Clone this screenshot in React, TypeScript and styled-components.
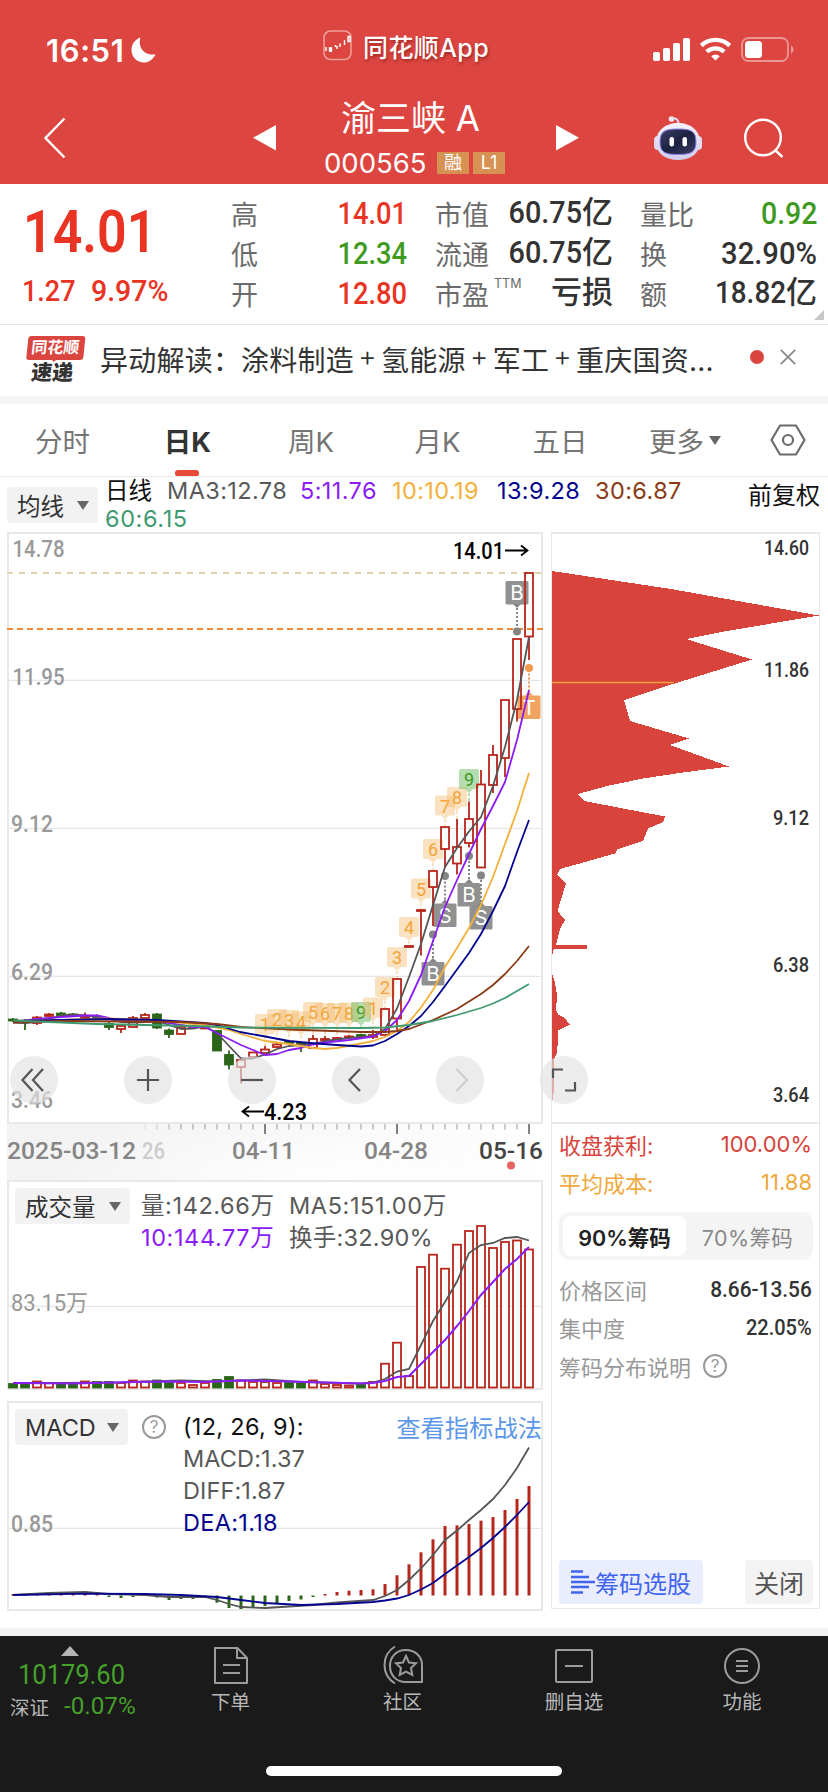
import React from 'react';
import styled, { createGlobalStyle } from 'styled-components';

const UI = `Inter, "Noto Sans CJK SC", sans-serif`;
const DIN = `Roboto, "Noto Sans CJK SC", sans-serif`;

const C = {
  brand: '#dd4540',
  red: '#e93323',
  green: '#3f9a22',
  ink: '#333333',
  label: '#6b6b6b',
  mute: '#999999',
  line: '#e8e8e8',
  up: '#b8261b',
  down: '#2a6518',
  ma3: '#555555',
  ma5: '#8b1cf6',
  ma10: '#f2b03c',
  ma13: '#04048f',
  ma30: '#8a3a14',
  ma60: '#3f9a70',
};

const GlobalStyle = createGlobalStyle`
  * { box-sizing: border-box; }
  body { margin: 0; background: #fff; font-family: ${UI}; }
  svg { display: block; flex: none; }
`;

const Page = styled.div`
  width: 828px;
  height: 1792px;
  display: flex;
  flex-direction: column;
  background: #fff;
  overflow: hidden;
`;

/* ---------- shared ---------- */

const Num = styled.span<{ $size: number; $sx?: number; $from?: 'left' | 'right' | 'center'; $color?: string; $weight?: number }>`
  display: inline-block;
  font-family: ${DIN};
  font-size: ${p => p.$size}px;
  font-weight: ${p => p.$weight ?? 500};
  color: ${p => p.$color ?? C.ink};
  transform: scaleX(${p => p.$sx ?? 0.88});
  transform-origin: ${p => p.$from ?? 'right'} center;
  white-space: nowrap;
`;

const Caret = styled.i<{ $w?: number; $h?: number }>`
  width: 0;
  height: 0;
  border-left: ${p => (p.$w ?? 12) / 2}px solid transparent;
  border-right: ${p => (p.$w ?? 12) / 2}px solid transparent;
  border-top: ${p => p.$h ?? 9}px solid #666;
`;

/* ---------- header ---------- */

const Header = styled.header`
  height: 184px;
  flex: none;
  background: ${C.brand};
  color: #fff;
`;

const StatusBar = styled.div`
  height: 92px;
  padding: 30px 0 0 46px;
  display: grid;
  grid-template-columns: 277px 330px 1fr;
  align-items: start;
`;

const Clock = styled.div`
  display: flex;
  align-items: center;
  gap: 7px;
  height: 40px;
  font-size: 31px;
  font-weight: 600;
  letter-spacing: 0.6px;
`;

const AppName = styled.div`
  display: flex;
  align-items: center;
  gap: 11px;
  height: 31px;
  font-size: 25px;
  font-weight: 500;
  letter-spacing: 0.4px;
  white-space: nowrap;
  text-shadow: 1px 2px 3px rgba(80, 0, 0, 0.45);
`;

const Signals = styled.div`
  display: flex;
  align-items: center;
  height: 40px;
`;

const TitleBar = styled.div`
  height: 92px;
  padding-left: 43px;
  display: flex;
  align-items: center;
`;

const TitleBlock = styled.div`
  width: 280px;
  height: 92px;
  display: flex;
  flex-direction: column;
  align-items: center;
`;

const StockName = styled.div`
  height: 54px;
  padding: 0 11px 0 0;
  font-size: 35px;
  line-height: 53px;
  white-space: nowrap;
`;

const CodeRow = styled.div`
  height: 36px;
  display: flex;
  align-items: center;
  font-size: 27.5px;
  line-height: 36px;
`;

const Code = styled.span`
  margin: -3px 11px 0 1px;
  width: 102px;
  white-space: nowrap;
`;

const Badge = styled.span`
  width: 32px;
  height: 22px;
  margin: -2px 4px 0 0;
  background: #d79152;
  font-size: 18px;
  line-height: 22px;
  text-align: center;
`;

const TitleGap = styled.span<{ $w: number }>`
  width: ${p => p.$w}px;
  flex: none;
`;

/* ---------- quote ---------- */

const Quote = styled.section`
  position: relative;
  height: 141px;
  flex: none;
  padding: 9px 11px 0 22px;
  display: flex;
  border-bottom: 1px solid #e6e6e6;
`;

const PriceBlock = styled.div`
  width: 209px;
`;

const BigPrice = styled.div`
  height: 78px;
  padding-left: 1px;
  line-height: 77px;
`;

const ChangeRow = styled.div`
  display: flex;
  line-height: 40px;
`;

const StatColumn = styled.div<{ $w: number; $gap: number }>`
  width: ${p => p.$w}px;
  margin-right: ${p => p.$gap}px;
`;

const Stat = styled.div`
  height: 40px;
  display: flex;
  justify-content: space-between;
  align-items: center;
  font-size: 27px;
  color: ${C.label};
  white-space: nowrap;
`;

const StatValue = styled.span`
  height: 40px;
  line-height: 39px;
  font-family: ${DIN};
  font-size: 31px;
  font-weight: 500;
  color: ${C.ink};
`;

const Sup = styled.sup`
  font-size: 12.5px;
  line-height: 12px;
  margin-left: 5px;
  position: relative;
  top: -7px;
`;

const Corner = styled.i`
  position: absolute;
  right: 4px;
  bottom: 4px;
  border-left: 10px solid transparent;
  border-bottom: 10px solid #c8c8c8;
`;

/* ---------- news ---------- */

const News = styled.section`
  height: 79px;
  flex: none;
  display: flex;
  align-items: center;
  padding: 0 32px 8px 24px;
  border-bottom: 8px solid #f4f4f4;
  font-size: 28px;
  color: ${C.ink};
`;

const NewsLogo = styled.div`
  width: 60px;
  margin: 7px 16px 0 0;
  display: flex;
  flex-direction: column;
  align-items: center;
  transform: skewX(-6deg);
`;

const LogoTop = styled.div`
  position: relative;
  width: 57px;
  height: 24px;
  border-radius: 3px;
  background: #db453f;
  color: #fff;
  font-size: 16px;
  font-weight: 700;
  line-height: 23px;
  text-align: center;
  &::after {
    content: '';
    position: absolute;
    left: 25px;
    top: 23px;
    border: 3px solid transparent;
    border-top-color: #db453f;
  }
`;

const LogoBottom = styled.div`
  margin-left: -1px;
  font-size: 21px;
  font-weight: 900;
  line-height: 25px;
`;

const Headline = styled.div`
  flex: 1;
  display: flex;
  white-space: nowrap;
  letter-spacing: 0.22px;
  margin-top: 4px;
`;

const Plus = styled.span`
  width: 27px;
  text-align: center;
  font-weight: 300;
`;

const RedDot = styled.i<{ $d: number }>`
  width: ${p => p.$d}px;
  height: ${p => p.$d}px;
  border-radius: 50%;
  background: #db453f;
  flex: none;
`;

/* ---------- tabs ---------- */

const Tabs = styled.nav`
  height: 73px;
  flex: none;
  display: grid;
  grid-template-columns: 125px 125px 122px 131px 114px 136px 70px;
  border-bottom: 1px solid #e8e8e8;
`;

const Tab = styled.div<{ $active?: boolean }>`
  position: relative;
  display: flex;
  align-items: center;
  justify-content: center;
  gap: 5px;
  font-size: 27.5px;
  white-space: nowrap;
  color: ${p => (p.$active ? C.ink : '#757575')};
  font-weight: ${p => (p.$active ? 700 : 400)};
  &::after {
    content: '';
    display: ${p => (p.$active ? 'block' : 'none')};
    position: absolute;
    left: 50px;
    bottom: 0;
    width: 24px;
    height: 6px;
    border-radius: 3px 3px 2px 2px;
    background: #e74a38;
  }
`;

/* ---------- moving average legend ---------- */

const Legend = styled.div`
  height: 55px;
  flex: none;
  display: flex;
  padding: 0 8px 0 7px;
  font-size: 23.5px;
`;

const PickerSlot = styled.div`
  padding-top: 10px;
`;

const Picker = styled.button<{ $w: number }>`
  width: ${p => p.$w}px;
  height: 36px;
  flex: none;
  padding: 0 9px 0 10px;
  display: flex;
  align-items: center;
  justify-content: space-between;
  border: 0;
  border-radius: 4px;
  background: #f2f2f2;
  color: ${C.ink};
  font: 400 23.5px ${UI};
  white-space: nowrap;
`;

const LegendItems = styled.div`
  flex: 1;
  display: flex;
  flex-wrap: wrap;
  gap: 0 15px;
  margin: 0 0 0 7px;
  line-height: 28px;
`;

const Entry = styled.span<{ $color?: string; $w?: number; $track?: number }>`
  color: ${p => p.$color ?? '#595959'};
  width: ${p => (p.$w ? p.$w + 'px' : 'auto')};
  letter-spacing: ${p => p.$track ?? 0.4}px;
  white-space: nowrap;
`;

const Adjust = styled.div`
  line-height: 37px;
  font-size: 24px;
  color: #111;
`;

/* ---------- main area ---------- */

const Main = styled.main`
  height: 1104px;
  flex: none;
  display: flex;
  gap: 8px;
  padding: 0 7px;
  border-bottom: 8px solid #f3f3f3;
`;

const Charts = styled.div`
  width: 536px;
  display: flex;
  flex-direction: column;
`;

const Panel = styled.div<{ $h: number; $mt?: number }>`
  position: relative;
  height: ${p => p.$h}px;
  margin-top: ${p => p.$mt ?? 0}px;
  flex: none;
  border: 2px solid ${C.line};
`;

const Canvas = styled.svg`
  position: absolute;
  left: -2px;
  top: -2px;
  overflow: visible;
`;

const Axis = styled.div`
  height: 56px;
  background: radial-gradient(ellipse 300px 90px at 330px 56px, #ffffff 0%, rgba(255,255,255,0) 100%), linear-gradient(90deg, #f3f3f3 0%, #f3f3f3 55%, #ffffff 100%);
`;

const ControlRow = styled.div`
  position: absolute;
  left: 1px;
  top: 522px;
  display: flex;
  gap: 56px;
  z-index: 2;
`;

const RoundButton = styled.button<{ $extra?: number }>`
  width: 48px;
  height: 48px;
  margin-right: ${p => p.$extra ?? 0}px;
  padding: 0;
  border: 0;
  border-radius: 50%;
  display: grid;
  place-items: center;
  background: rgba(226, 226, 226, 0.66);
`;

const PanelHead = styled.div`
  position: relative;
  display: flex;
  padding: 6px 0 0 6px;
  font-size: 23.5px;
`;

const VolumeText = styled.div`
  margin: 2px 0 0 11px;
  display: grid;
  grid-template-columns: 148px 170px;
  line-height: 32px;
`;

const MacdText = styled.div`
  margin-left: 17px;
  display: flex;
  flex-direction: column;
  line-height: 32px;
  padding-top: 2px;
`;

const Help = styled.span<{ $mt?: number }>`
  width: 24px;
  height: 24px;
  margin-top: ${p => p.$mt ?? 0}px;
  flex: none;
  border: 2px solid #999;
  border-radius: 50%;
  color: #999;
  font-size: 17px;
  line-height: 20px;
  text-align: center;
`;

const StrategyLink = styled.a`
  margin: 3px -1px 0 auto;
  line-height: 32px;
  font-size: 24.3px;
  color: #5b97e8;
`;

/* ---------- chips ---------- */

const Chips = styled.aside`
  width: 269px;
  height: 1077px;
  border: 1.5px solid ${C.line};
  border-top-width: 2px;
  display: flex;
  flex-direction: column;
`;

const ChipChart = styled.div`
  position: relative;
  height: 590px;
  flex: none;
  border-bottom: 2px solid ${C.line};
`;

const ChipInfo = styled.div`
  flex: 1;
  display: flex;
  flex-direction: column;
  padding: 1px 6px 3px 7px;
  font-size: 22px;
`;

const InfoRow = styled.div<{ $color: string }>`
  height: 38px;
  display: flex;
  align-items: center;
  justify-content: space-between;
  color: ${p => p.$color};
  padding-right: 1px;
  white-space: nowrap;
`;

const Segment = styled.div`
  height: 48px;
  margin: 11px 0 10px;
  padding: 4px;
  display: flex;
  border-radius: 11px;
  background: #f4f4f4;
`;

const SegmentItem = styled.div<{ $active?: boolean }>`
  flex: 1;
  display: grid;
  place-items: center;
  border-radius: 8px;
  background: ${p => (p.$active ? '#fff' : 'transparent')};
  color: ${p => (p.$active ? '#222' : '#888')};
  font-weight: ${p => (p.$active ? 600 : 400)};
  font-size: 21.5px;
  letter-spacing: ${p => (p.$active ? 0 : 0.4)}px;
`;

const HelpRow = styled.div`
  height: 40px;
  display: flex;
  align-items: center;
  gap: 12px;
  color: ${C.mute};
`;

const ChipActions = styled.div`
  margin-top: auto;
  display: flex;
  justify-content: space-between;
  padding-bottom: 1px;
`;

const ActionButton = styled.button<{ $w: number; $primary?: boolean }>`
  width: ${p => p.$w}px;
  height: 44px;
  padding: 0;
  border: 0;
  border-radius: 4px;
  display: flex;
  align-items: center;
  justify-content: center;
  background: ${p => (p.$primary ? '#e9edfe' : '#f3f3f3')};
  color: ${p => (p.$primary ? '#4064ee' : '#555')};
  font: 400 ${p => (p.$primary ? 24 : 25)}px ${UI};
  white-space: nowrap;
`;

/* ---------- bottom bar ---------- */

const Bottom = styled.footer`
  flex: 1;
  position: relative;
  background: #1a1a1a;
  color: #b8b8b8;
  display: flex;
`;

const IndexBlock = styled.div`
  width: 148px;
  padding: 10px 0 0 10px;
`;

const IndexArrow = styled.i`
  display: block;
  width: 0;
  margin-left: 51px;
  border-left: 9px solid transparent;
  border-right: 9px solid transparent;
  border-bottom: 10px solid #b5b5b5;
`;

const IndexValue = styled.div`
  height: 38px;
  line-height: 37px;
  padding-left: 8px;
`;

const IndexRow = styled.div`
  height: 24px;
  display: flex;
  align-items: center;
  font-size: 19.5px;
  white-space: nowrap;
`;

const NavItem = styled.div<{ $w: number }>`
  width: ${p => p.$w}px;
  padding-top: 9px;
  display: flex;
  flex-direction: column;
  align-items: center;
  font-size: 19.5px;
  line-height: 35px;
`;

const HomeBar = styled.i`
  position: absolute;
  left: 266px;
  bottom: 16px;
  width: 296px;
  height: 10px;
  border-radius: 5px;
  background: #fff;
`;

/* ---------- chart data ---------- */

const STEP = 12;
const LAST = 529;
const cx = (k: number) => LAST - STEP * k;

// [high, bodyTop, bodyBottom, low, rising], newest first
type Candle = [number, number, number, number, 0 | 1];
const candles: Candle[] = [
  [573, 573, 636.5, 660, 1], [639, 639, 709, 721.5, 1], [700, 700, 758, 777, 1], [745, 755, 785, 793, 1],
  [770, 784.5, 867.5, 868, 1], [801.5, 819, 843, 847.5, 1], [819, 847, 863.5, 874.5, 1], [827, 827, 849, 867.5, 1],
  [871, 871, 887, 926, 1], [910, 910, 911, 955.5, 1], [946, 946, 947, 947, 1], [979, 979, 1018.5, 1030, 1],
  [1009, 1009, 1035, 1035, 1], [1030, 1035, 1037, 1039, 1], [1034, 1035, 1037, 1037, 0], [1035, 1036.5, 1037.5, 1038, 1],
  [1037, 1038, 1039, 1040, 1], [1036, 1039, 1040, 1042, 1], [1035, 1039, 1048, 1049, 1], [1042, 1043, 1045, 1052, 0],
  [1041, 1042, 1043, 1045, 0], [1043, 1044.5, 1047, 1048, 1], [1046, 1049.5, 1053, 1053, 1], [1052, 1052.5, 1057, 1057, 1],
  [1059, 1060, 1067, 1083.5, 1], [1050.5, 1055, 1064.5, 1069.5, 0], [1030, 1031, 1050.5, 1051, 0], [1026, 1027, 1028.5, 1029, 1],
  [1025, 1026, 1027, 1028, 1], [1026, 1027, 1034, 1034, 1], [1028.5, 1030.5, 1034, 1038, 0], [1013, 1014.5, 1027.5, 1029, 0],
  [1013, 1015, 1018, 1018, 1], [1016, 1018, 1027, 1027, 1], [1025, 1026, 1029, 1033, 1], [1022, 1024, 1027, 1030, 0],
  [1014.5, 1018, 1019, 1020, 0], [1012.5, 1017, 1018, 1019, 1], [1013, 1014.5, 1015, 1016, 0], [1012, 1013.5, 1015.5, 1016, 0],
  [1013, 1014.5, 1016, 1016, 1], [1016, 1017.5, 1023, 1025, 1], [1019, 1021, 1021.5, 1030, 0], [1018, 1019.5, 1020.5, 1022, 0],
];

const volumeTops = [
  1249.5, 1240.5, 1242, 1248, 1226, 1231, 1244.7, 1268.7, 1254.7, 1267, 1376, 1342.7, 1363.7, 1382, 1385, 1385.5,
  1385, 1384, 1380.5, 1383.5, 1383, 1383, 1382, 1382, 1380.5, 1377, 1380, 1383, 1385, 1383, 1383, 1380.5, 1381.5,
  1380.5, 1383, 1382, 1382, 1381.5, 1384, 1384, 1383, 1381.5, 1383, 1384,
];
const fallingVolume = [14, 19, 20, 25, 26, 30, 31, 35, 36, 38, 39, 42, 43];

const macdEnds = [
  1486, 1499, 1510, 1517, 1520.7, 1524, 1525.3, 1526, 1539.3, 1552.3, 1564.3, 1575.3, 1584, 1589.3, 1590, 1590.7,
  1592, 1594, 1597, 1599.5, 1601, 1603.5, 1606, 1607.5, 1609, 1608, 1602.7, 1597, 1599, 1599, 1600, 1597.5, 1594.5,
  1597, 1598, 1597, 1594, 1593.5, 1593, 1593, 1593, 1594, 1594, 1594,
];
const MACD_ZERO = 1595.5;

const averages: [string, string][] = [
  [C.ma3, '13,1022.5 25,1023 37,1022 49,1019 61,1015.5 73,1014.5 85,1015.5 97,1016.5 109,1019 121,1022 133,1022.5 145,1022 157,1021 169,1025 181,1029 193,1028.5 205,1026.5 217,1033 229,1046 241,1058.5 253,1058.5 265,1054.5 277,1049 289,1046 301,1045 313,1044 325,1041 337,1039.5 349,1038 361,1037 373,1036 385,1029 397,1008.5 409,977 421,944 433,905 445,867 457,848 469,831.5 481,817 493,786 505,747 517,700 529,637'],
  [C.ma5, '13,1022 37,1019 61,1017 85,1015.5 97,1015.5 109,1018 121,1021 157,1021 169,1023 193,1027 205,1027 217,1033 229,1039 241,1045 253,1050 265,1055 277,1054 289,1050 301,1048 313,1044.5 325,1042.5 349,1040 373,1036.5 385,1031 397,1020 409,1001 421,975 433,941 445,907 457,880 469,854 481,829 493,806 505,782 517,740 529,690'],
  [C.ma10, '13,1021 61,1020 109,1018.5 157,1020.5 205,1025 229,1030 241,1034 265,1041 289,1044 313,1048 325,1049 337,1048 361,1043.5 373,1041 385,1037 397,1031 409,1022 421,1007.5 433,990 445,967 457,948 469,928 481,905 493,877 505,844 517,811 529,773'],
  [C.ma13, '13,1021 61,1020 109,1019 157,1020 205,1023 217,1025 240,1032 265,1036.5 289,1041 310,1043 337,1045 361,1046.5 373,1045.5 385,1041 397,1034 409,1026 421,1016 433,1002 445,986 469,953 481,934 493,911 505,886 517,852 529,820'],
  [C.ma30, '13,1022.5 61,1021 121,1021.5 181,1022 217,1024 241,1027 289,1029.5 361,1032 385,1032 397,1031 409,1029 433,1020 457,1009 481,994 493,985 505,974 517,961 529,946'],
  [C.ma60, '13,1020.5 97,1024 193,1026 241,1027.5 361,1028 385,1027.5 409,1025 433,1021 457,1015 481,1008 493,1003.5 505,998 517,991 529,984'],
];

const counts: [number, number, string][] = [
  [22, 1014, '1'], [21, 1009, '2'], [20, 1010, '3'], [19, 1011.5, '4'], [18, 1002, '5'], [17, 1003, '6'],
  [16, 1003, '7'], [15, 1002.5, '8'], [14, 1002, '9'], [13, 997.5, '1'], [12, 977, '2'], [11, 947, '3'],
  [10, 917, '4'], [9, 878.5, '5'], [8, 839, '6'], [7, 795.5, '7'], [6, 787, '8'], [5, 769, '9'],
];

// [index, tag top, dot y, letter, colour]
const trades: [number, number, number, string, string][] = [
  [1, 581, 631.5, 'B', '#858585'],
  [0, 695.5, 668, 'T', '#f09a50'],
  [7, 903.5, 876, 'S', '#858585'],
  [5, 883, 856, 'B', '#858585'],
  [4, 906, 875.5, 'S', '#858585'],
  [8, 962, 934.5, 'B', '#858585'],
];

const TextIn = ({ x, y, w, size = 23, color = C.mute, weight = 500, children }: { x: number; y: number; w: number; size?: number; color?: string; weight?: number; children: string }) => (
  <text x={x} y={y} fontFamily={DIN} fontSize={size} fontWeight={weight} fill={color} textLength={w} lengthAdjust="spacingAndGlyphs">
    {children}
  </text>
);

const CountTag = ({ k, top, label }: { k: number; top: number; label: string }) => {
  const x = cx(k);
  const last = label === '9';
  const tint = last ? 'rgba(110,187,98,0.5)' : 'rgba(243,180,95,0.4)';
  const end = Math.max(candles[k][0], top + 26);
  return (
    <g>
      <path d={`M${x - 8} ${top}h16a2 2 0 0 1 2 2v16a2 2 0 0 1 -2 2h-4l-4 4l-4 -4h-4a2 2 0 0 1 -2 -2v-16a2 2 0 0 1 2 -2z`} fill={tint} />
      <line x1={x} x2={x} y1={top + 24} y2={end} stroke={tint} strokeWidth="2" strokeDasharray="3 2" />
      <text x={x} y={top + 17} textAnchor="middle" fontFamily={DIN} fontSize="18" fontWeight="400" fill={last ? '#3b9a1f' : '#f2a53a'}>
        {label}
      </text>
    </g>
  );
};

const TradeTag = ({ k, top, dot, letter, color }: { k: number; top: number; dot: number; letter: string; color: string }) => {
  const x = cx(k);
  const above = dot > top;
  const edge = above ? top + 23 : top;
  return (
    <g>
      <line x1={x} x2={x} y1={edge} y2={dot} stroke={color} strokeWidth="2" strokeDasharray="2 2" />
      <circle cx={x} cy={dot} r="4" fill={color} />
      <rect x={x - 11.5} y={top} width="23" height="23.5" rx="1.5" fill={color} opacity="0.9" />
      <path d={above ? `M${x - 4} ${edge}h8l-4 4z` : `M${x - 4} ${edge}h8l-4 -4z`} fill={color} />
      <text x={x} y={top + 19} textAnchor="middle" fontFamily={UI} fontSize="20.5" fontWeight="400" fill="#fff">
        {letter}
      </text>
    </g>
  );
};

const KLineChart = () => (
  <Canvas width="536" height="592" viewBox="7 532 536 592">
    {[680.3, 828.3, 976.3].map(y => (
      <line key={y} x1="8" x2="542" y1={y} y2={y} stroke="#e6e6e6" strokeWidth="1.3" />
    ))}
    <TextIn x={12.5} y={557} w={52}>14.78</TextIn>
    <TextIn x={12.5} y={684.5} w={52}>11.95</TextIn>
    <TextIn x={11} y={832} w={42}>9.12</TextIn>
    <TextIn x={11} y={979.5} w={42}>6.29</TextIn>
    <TextIn x={11} y={1107.7} w={42}>3.46</TextIn>
    <line x1="7" x2="543" y1="573" y2="573" stroke="#e3d2b2" strokeWidth="2" strokeDasharray="6 6" />
    <line x1="7" x2="543" y1="629" y2="629" stroke="#f08a36" strokeWidth="2" strokeDasharray="6 4" />
    {counts.map(([k, top, label]) => <CountTag key={k} k={k} top={top} label={label} />)}
    {trades.map(([k, top, dot, letter, color]) => <TradeTag key={k} k={k} top={top} dot={dot} letter={letter} color={color} />)}
    {candles.map(([high, top, bottom, low, up], k) => (
      <g key={k} stroke={up ? C.up : C.down} strokeWidth="1.8" fill={up ? 'none' : C.down}>
        <line x1={cx(k)} x2={cx(k)} y1={high} y2={top} />
        <line x1={cx(k)} x2={cx(k)} y1={bottom} y2={low} />
        <rect x={cx(k) - 4} y={top} width="8" height={bottom - top} />
      </g>
    ))}
    {averages.map(([color, points]) => (
      <polyline key={color} points={points} fill="none" stroke={color} strokeWidth="1.8" strokeLinejoin="round" />
    ))}
    <TextIn x={453} y={558.7} w={51} color="#000">14.01</TextIn>
    <path d="M505 550.5H527M521 545.5l6.5 5l-6.5 5" stroke="#000" strokeWidth="1.8" fill="none" />
    <TextIn x={264} y={1120} w={43} color="#000">4.23</TextIn>
    <path d="M264 1111.500H243M249 1106.500l-6.500 5l6.500 5" stroke="#000" strokeWidth="1.8" fill="none" />
  </Canvas>
);

const DateAxis = () => (
  <svg width="536" height="56" viewBox="7 1124 536 56">
    {Array.from({ length: 33 }, (_, i) => {
      const k = 32 - i;
      const major = k === 0 || k === 11 || k === 22;
      return <line key={k} x1={cx(k)} x2={cx(k)} y1="1124" y2={major ? 1134 : 1129.5} stroke={major ? '#808080' : '#999'} strokeWidth={major ? 2 : 1} opacity={i < 3 ? 0.25 + i * 0.25 : 1} />;
    })}
    <TextIn x={7} y={1159} w={129} color="#858585">2025-03-12</TextIn>
    <TextIn x={142} y={1159} w={23} color="#cccccc">26</TextIn>
    <TextIn x={232} y={1159} w={63} color="#858585">04-11</TextIn>
    <TextIn x={364} y={1159} w={64} color="#858585">04-28</TextIn>
    <TextIn x={479} y={1159} w={64} color="#444">05-16</TextIn>
    <circle cx="511" cy="1165.500" r="4" fill="#e56462" />
  </svg>
);

const VolumeChart = () => (
  <Canvas width="536" height="210" viewBox="7 1180 536 210">
    <line x1="8" x2="542" y1="1306.300" y2="1306.300" stroke="#e6e6e6" strokeWidth="1.3" />
    <TextIn x={11} y={1311} w={77} weight={400}>83.15万</TextIn>
    {volumeTops.map((top, k) => {
      const falling = fallingVolume.includes(k);
      return <rect key={k} x={cx(k) - 4} y={top} width="8" height={1387.5 - top} stroke={falling ? C.down : C.up} strokeWidth="1.8" fill={falling ? C.down : '#fff'} />;
    })}
    <polyline points="13,1383 61,1383 121,1382.500 181,1380.500 217,1381.500 265,1379.500 301,1382 361,1383.500 373,1382.500 385,1379 397,1371.500 409,1369 421,1345 433,1321 445,1302 457,1281.500 469,1253 481,1245 493,1243 505,1238 517,1237 529,1240.500" fill="none" stroke={C.ma3} strokeWidth="1.8" />
    <polyline points="13,1383 73,1383.500 133,1382 169,1381.500 205,1382 241,1380.500 289,1381.500 325,1382.500 361,1383.500 373,1383 385,1381 397,1377 409,1376 421,1364 433,1352 445,1340 457,1326 469,1311 481,1295 493,1282 505,1269 517,1259 529,1247" fill="none" stroke={C.ma5} strokeWidth="2" />
  </Canvas>
);

const MacdChart = () => (
  <Canvas width="536" height="210" viewBox="7 1401 536 210">
    <line x1="8" x2="542" y1="1528.300" y2="1528.300" stroke="#e6e6e6" strokeWidth="1.3" />
    <TextIn x={11} y={1531.7} w={42}>0.85</TextIn>
    {macdEnds.map((end, k) => (
      <line key={k} x1={cx(k)} x2={cx(k)} y1={MACD_ZERO} y2={end} stroke={end < MACD_ZERO ? C.up : C.down} strokeWidth="3" />
    ))}
    <polyline points="13,1595 49,1593 85,1592 109,1594 145,1595 169,1597 205,1597 217,1600 229,1604 241,1607 265,1608 289,1606.500 313,1605 337,1602.500 373,1600 385,1596 397,1590 409,1580 421,1568.500 433,1555 445,1540 457,1530.500 469,1520 481,1510 493,1499 505,1485 517,1468 529,1447.500" fill="none" stroke={C.ma3} strokeWidth="1.8" />
    <polyline points="13,1595 85,1593.700 145,1594 181,1595 217,1597 241,1600 265,1603 301,1605 337,1604 373,1602 385,1600.500 397,1598.500 409,1595 421,1589.500 433,1583 445,1574 457,1565.500 469,1557 481,1548 493,1538 505,1527 517,1515 529,1502" fill="none" stroke={C.ma13} strokeWidth="1.8" />
  </Canvas>
);

const ChipDistribution = () => (
  <svg width="267" height="588" viewBox="552 534 267 588">
    <g fill="#d8433b" shapeRendering="crispEdges">
      <path d="M552 571L671 589L819 615.500L727 631L686 639L752 659.500L673 684L624 700L630 721L689 738.500L670 745L729 766.500L683 772.500L643 778.500L607 786L578 794L584 801L665 816.500L663 822L648 828.500L643 841L617 849.500L615 853.500L560 869L557 875L566 883L557.500 911L565 920L560 929L556 945H587V948.500H554L552 956Z" />
      <path d="M552 973L555 983L557.500 998L555.500 1008L558 1014.500L564 1017.500L570 1024.500L557.500 1031L558.500 1038.500L556.500 1054L553.500 1060V1094L552 1103Z" />
    </g>
    <line x1="552" x2="674" y1="682.500" y2="682.500" stroke="#f2a13c" strokeWidth="1.5" />
    <TextIn x={764} y={555} w={45} size={20} color={C.ink}>14.60</TextIn>
    <TextIn x={764} y={677} w={45} size={20} color={C.ink}>11.86</TextIn>
    <TextIn x={773} y={824.5} w={36} size={20} color={C.ink}>9.12</TextIn>
    <TextIn x={773} y={972} w={36} size={20} color={C.ink}>6.38</TextIn>
    <TextIn x={773} y={1102} w={36} size={20} color={C.ink}>3.64</TextIn>
  </svg>
);

/* ---------- icons ---------- */

const Glyph = ({ d, color = '#555', width = 2.2 }: { d: string; color?: string; width?: number }) => (
  <svg width="48" height="48" viewBox="0 0 48 48" fill="none" stroke={color} strokeWidth={width}>
    <path d={d} />
  </svg>
);

const Robot = () => (
  <svg width="48" height="46" viewBox="0 0 48 46">
    <defs>
      <linearGradient id="shell" x1="0" y1="0" x2="0" y2="1">
        <stop offset="0" stopColor="#f4f3fb" />
        <stop offset="1" stopColor="#cfcdea" />
      </linearGradient>
      <linearGradient id="visor" x1="0" y1="0" x2="1" y2="1">
        <stop offset="0" stopColor="#3b4368" />
        <stop offset="0.5" stopColor="#1c2140" />
        <stop offset="1" stopColor="#3a3f66" />
      </linearGradient>
    </defs>
    <path d="M18 4C22 2.500 24.500 4.500 24.500 9" fill="none" stroke="#dcdaf0" strokeWidth="2" />
    <circle cx="17.500" cy="4" r="2.800" fill="#e9e7f5" />
    <rect x="0" y="21" width="8" height="14" rx="4" fill="#dedcf0" />
    <rect x="40" y="21" width="8" height="14" rx="4" fill="#dedcf0" />
    <path d="M24 8C37 8 46 16 46 27C46 38 37 45 24 45S2 38 2 27C2 16 11 8 24 8Z" fill="url(#shell)" />
    <path d="M24 14C37 14 42 16 42 27C42 38 36 39.500 24 39.500S6 38 6 27C6 16 11 14 24 14Z" fill="url(#visor)" stroke="#8f80ee" strokeWidth="1" />
    <rect x="15.500" y="22" width="4.500" height="9.500" rx="2.200" fill="#fff" />
    <rect x="28.500" y="22" width="4.500" height="9.500" rx="2.200" fill="#fff" />
  </svg>
);

const navStroke = { fill: 'none', stroke: '#9c9c9c', strokeWidth: 2 } as const;

export default function App() {
  return (
    <Page>
      <GlobalStyle />
      <Header>
        <StatusBar>
          <Clock>
            16:51
            <svg width="25" height="26" viewBox="0 0 25 26"><path d="M9.500 0.500C7 8.500 11 18.500 24.500 17.500C21.500 23 17.500 25.500 13 25.500C6 25.500 0.500 20 0.500 13C0.500 7 4 2.500 9.500 0.500Z" fill="#fff" /></svg>
          </Clock>
          <AppName>
            <svg width="29" height="31" viewBox="0 0 29 31" fill="none" stroke="#fff">
              <rect x="1" y="1" width="27" height="28.500" rx="6.500" stroke="#f0a09c" strokeWidth="1.500" />
              <path d="M3 17v4M7.500 17.500v4.500M12.500 15v2M14 16v3M17 13.500v3.500" strokeWidth="1.500" />
              <path d="M6.500 18h2v3h-2zM21.500 10v5M25 6.500h2v5h-2z" strokeWidth="1.400" />
            </svg>
            同花顺App
          </AppName>
          <Signals>
            <svg width="142" height="26" viewBox="0 0 142 26">
              <g fill="#fff">
                <rect x="0" y="15" width="7" height="9" rx="1.800" />
                <rect x="10" y="11" width="7" height="13" rx="1.800" />
                <rect x="20" y="6" width="7" height="18" rx="1.800" />
                <rect x="30" y="1" width="7" height="23" rx="1.800" />
                <path d="M62.500 23.500L58.200 19.200A6.500 6.500 0 0 1 66.800 19.200Z" />
              </g>
              <path d="M53.800 14.800A12.500 12.500 0 0 1 71.200 14.800" fill="none" stroke="#fff" strokeWidth="4.200" />
              <path d="M48.300 8.600A20.500 20.500 0 0 1 76.700 8.600" fill="none" stroke="#fff" strokeWidth="4.400" />
              <rect x="89" y="1" width="46" height="23" rx="6.500" fill="none" stroke="#eb9693" strokeWidth="1.800" />
              <rect x="92" y="4" width="17" height="17" rx="3.500" fill="#fff" />
              <path d="M138 8.500C141.500 10 141.500 15 138 16.500Z" fill="#eb9693" />
            </svg>
          </Signals>
        </StatusBar>
        <TitleBar>
          <svg width="24" height="42" viewBox="0 0 24 42" fill="none" stroke="#fff" strokeWidth="2.400"><path d="M21.500 1.500L2.500 21L21.500 40.500" /></svg>
          <TitleGap $w={186} />
          <svg width="23" height="26" viewBox="0 0 23 26"><path d="M23 0V25.500L0 12.700Z" fill="#fff" /></svg>
          <TitleBlock>
            <StockName>渝三峡 A</StockName>
            <CodeRow>
              <Code>000565</Code>
              <Badge>融</Badge>
              <Badge>L1</Badge>
            </CodeRow>
          </TitleBlock>
          <svg width="23" height="26" viewBox="0 0 23 26"><path d="M0 0V25.500L23 12.700Z" fill="#fff" /></svg>
          <TitleGap $w={75} />
          <Robot />
          <TitleGap $w={42} />
          <svg width="41" height="42" viewBox="0 0 41 42" fill="none" stroke="#fff" strokeWidth="2.400"><circle cx="19" cy="20.500" r="17.800" /><path d="M31.500 33.500L38.500 40" /></svg>
        </TitleBar>
      </Header>

      <Quote>
        <PriceBlock>
          <BigPrice><Num $size={59} $sx={0.88} $from="left" $weight={600} $color={C.red}>14.01</Num></BigPrice>
          <ChangeRow>
            <Num $size={30} $sx={0.9} $from="left" $color={C.red}>1.27</Num>
            <TitleGap $w={9} />
            <Num $size={30} $sx={0.95} $from="left" $color={C.red}>9.97%</Num>
          </ChangeRow>
        </PriceBlock>
        <StatColumn $w={176} $gap={28}>
          <Stat>高<Num $size={31} $color={C.red}>14.01</Num></Stat>
          <Stat>低<Num $size={31} $color={C.green}>12.34</Num></Stat>
          <Stat>开<Num $size={31} $color={C.red}>12.80</Num></Stat>
        </StatColumn>
        <StatColumn $w={178} $gap={27}>
          <Stat>市值<StatValue><Num $size={31} $sx={0.93}>60.75</Num>亿</StatValue></Stat>
          <Stat>流通<StatValue><Num $size={31} $sx={0.93}>60.75</Num>亿</StatValue></Stat>
          <Stat><span>市盈<Sup>TTM</Sup></span><StatValue>亏损</StatValue></Stat>
        </StatColumn>
        <StatColumn $w={177} $gap={0}>
          <Stat>量比<Num $size={31} $sx={0.92} $color={C.green}>0.92</Num></Stat>
          <Stat>换<Num $size={31} $sx={0.94}>32.90%</Num></Stat>
          <Stat>额<StatValue><Num $size={31} $sx={0.9}>18.82</Num>亿</StatValue></Stat>
        </StatColumn>
        <Corner />
      </Quote>

      <News>
        <NewsLogo>
          <LogoTop>同花顺</LogoTop>
          <LogoBottom>速递</LogoBottom>
        </NewsLogo>
        <Headline>
          异动解读：涂料制造<Plus>+</Plus>氢能源<Plus>+</Plus>军工<Plus>+</Plus>重庆国资...
        </Headline>
        <RedDot $d={14} />
        <TitleGap $w={16} />
        <svg width="16" height="16" viewBox="0 0 16 16" stroke="#8a8a8a" strokeWidth="1.800"><path d="M0.800 0.800L15.200 15.200M15.200 0.800L0.800 15.200" /></svg>
      </News>

      <Tabs>
        <Tab>分时</Tab>
        <Tab $active>日K</Tab>
        <Tab>周K</Tab>
        <Tab>月K</Tab>
        <Tab>五日</Tab>
        <Tab>更多<Caret $w={13} $h={9} /></Tab>
        <Tab>
          <svg width="36" height="32" viewBox="0 0 36 32" fill="none" stroke="#6b6b6b" strokeWidth="2.200"><path d="M10 1.500H26L34.500 16L26 30.500H10L1.500 16Z" strokeLinejoin="round" /><circle cx="18" cy="16" r="5" /></svg>
        </Tab>
      </Tabs>

      <Legend>
        <PickerSlot><Picker $w={91}>均线<Caret /></Picker></PickerSlot>
        <LegendItems>
          <Entry $color="#111" $track={0}>日线</Entry>
          <Entry $w={118}>MA3:12.78</Entry>
          <Entry $w={77} $color={C.ma5}>5:11.76</Entry>
          <Entry $w={90} $color={C.ma10}>10:10.19</Entry>
          <Entry $w={83} $color={C.ma13}>13:9.28</Entry>
          <Entry $w={90} $color={C.ma30}>30:6.87</Entry>
          <Entry $color={C.ma60} $track={0.6}>60:6.15</Entry>
        </LegendItems>
        <Adjust>前复权</Adjust>
      </Legend>

      <Main>
        <Charts>
          <Panel $h={592}>
            <KLineChart />
            <ControlRow>
              <RoundButton $extra={10}><Glyph d="M22.500 13L12.500 24L22.500 35M33 13L23 24L33 35" /></RoundButton>
              <RoundButton><Glyph d="M24 13V35M13 24H35" /></RoundButton>
              <RoundButton><Glyph d="M13 24H35" /></RoundButton>
              <RoundButton><Glyph d="M28 13L17.500 24L28 35" /></RoundButton>
              <RoundButton><Glyph d="M20.500 13L31 24L20.500 35" color="#cfcfcf" /></RoundButton>
              <RoundButton><Glyph d="M13 22V13.500H23M35 26V34.500H25" /></RoundButton>
            </ControlRow>
          </Panel>
          <Axis><DateAxis /></Axis>
          <Panel $h={210}>
            <VolumeChart />
            <PanelHead>
              <Picker $w={115}>成交量<Caret /></Picker>
              <VolumeText>
                <Entry $track={0.6}>量:142.66万</Entry>
                <Entry $track={0.6}>MA5:151.00万</Entry>
                <Entry $track={0.6} $color={C.ma5}>10:144.77万</Entry>
                <Entry $track={0.25}>换手:32.90%</Entry>
              </VolumeText>
            </PanelHead>
          </Panel>
          <Panel $h={210} $mt={11}>
            <MacdChart />
            <PanelHead>
              <Picker $w={113}>MACD<Caret /></Picker>
              <TitleGap $w={14} />
              <Help $mt={6}>?</Help>
              <MacdText>
                <Entry $color="#111" $track={0.3}>(12, 26, 9):</Entry>
                <Entry $track={0.1}>MACD:1.37</Entry>
                <Entry $track={0.1}>DIFF:1.87</Entry>
                <Entry $track={0.3} $color={C.ma13}>DEA:1.18</Entry>
              </MacdText>
              <StrategyLink>查看指标战法</StrategyLink>
            </PanelHead>
          </Panel>
        </Charts>

        <Chips>
          <ChipChart><ChipDistribution /></ChipChart>
          <ChipInfo>
            <InfoRow $color="#d8433b"><span>收盘获利:</span><span>100.00%</span></InfoRow>
            <InfoRow $color="#f0a83c"><span>平均成本:</span><span>11.88</span></InfoRow>
            <Segment>
              <SegmentItem $active>90%筹码</SegmentItem>
              <SegmentItem>70%筹码</SegmentItem>
            </Segment>
            <InfoRow $color={C.mute}><span>价格区间</span><Num $size={21.5} $sx={0.97}>8.66-13.56</Num></InfoRow>
            <InfoRow $color={C.mute}><span>集中度</span><Num $size={21.5} $sx={0.93}>22.05%</Num></InfoRow>
            <HelpRow>筹码分布说明<Help>?</Help></HelpRow>
            <ChipActions>
              <ActionButton $w={144} $primary>
                <svg width="24" height="24" viewBox="0 0 24 24" stroke="#4064ee" strokeWidth="2.600"><path d="M0 1.500H12M0 7H18M0 12H24M0 17H18M0 22.500H12" /></svg>
                筹码选股
              </ActionButton>
              <ActionButton $w={68}>关闭</ActionButton>
            </ChipActions>
          </ChipInfo>
        </Chips>
      </Main>

      <Bottom>
        <IndexBlock>
          <IndexArrow />
          <IndexValue><Num $size={28} $sx={0.91} $from="left" $weight={400} $color="#46a02a">10179.60</Num></IndexValue>
          <IndexRow>深证<TitleGap $w={15} /><Num $size={24} $sx={1.01} $from="left" $weight={400} $color="#46a02a">-0.07%</Num></IndexRow>
        </IndexBlock>
        <NavItem $w={165}>
          <svg width="38" height="40" viewBox="0 0 38 40" {...navStroke}><path d="M3 3H25.500L35 13V38H3ZM25 3V13H35M11 20H28M11 28H28" strokeLinejoin="round" /></svg>
          下单
        </NavItem>
        <NavItem $w={179}>
          <svg width="42" height="40" viewBox="0 0 42 40" {...navStroke}>
            <path d="M13 1.500C-1 10 -1 30 13 38.500" />
            <path d="M24 5C33 5 40 11.500 40 20V37H24C14 37 8 30 8 21C8 12 14 5 24 5Z" strokeLinejoin="round" />
            <path d="M24 11L27 17.500L34 18.300L29 23L30.300 30L24 26.600L17.700 30L19 23L14 18.300L21 17.500Z" strokeLinejoin="miter" />
          </svg>
          社区
        </NavItem>
        <NavItem $w={164}>
          <svg width="40" height="40" viewBox="0 0 40 40" {...navStroke}><rect x="2" y="5" width="36" height="32" rx="1" /><path d="M11 21H29" /></svg>
          删自选
        </NavItem>
        <NavItem $w={172}>
          <svg width="40" height="40" viewBox="0 0 40 40" {...navStroke}><circle cx="20" cy="21" r="17" /><path d="M14 16H26M14 21H26M14 26H26" /></svg>
          功能
        </NavItem>
        <HomeBar />
      </Bottom>
    </Page>
  );
}
